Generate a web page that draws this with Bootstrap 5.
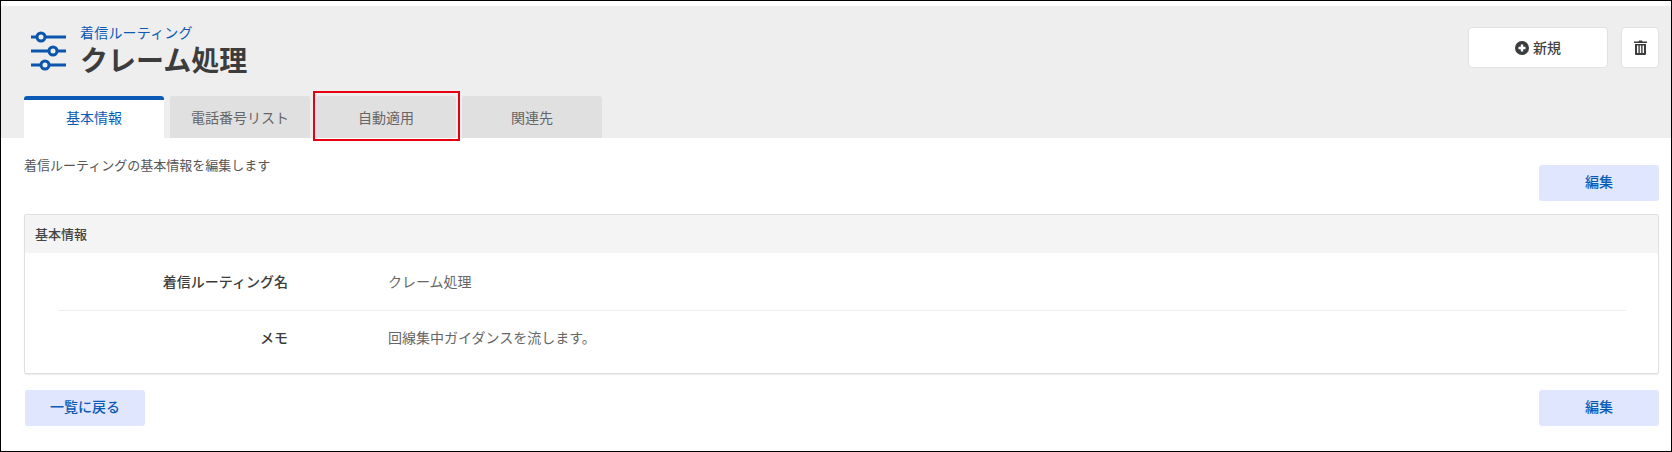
<!DOCTYPE html>
<html lang="ja">

<head>
    <meta charset="UTF-8">
    <meta name="viewport" content="width=device-width, initial-scale=1.0">
    <title>クレーム処理</title>
    <link href="https://cdn.jsdelivr.net/npm/bootstrap@5.3.0/dist/css/bootstrap.min.css" rel="stylesheet">
    <style>
        body {
            font-family: "Noto Sans CJK JP", "Liberation Sans", sans-serif;
            font-size: 14px;
            color: #555;
            background: #fff;
        }

        .frame {
            height: 452px;
            border: 1px solid #000;
            padding-top: 5px;
        }

        .page-head {
            background: #eee;
            height: 132px;
            padding: 0 12px 0 23px;
        }

        .head-top {
            height: 90px;
        }

        .head-title {
            padding: 19px 0 0 12px;
        }

        .head-sub {
            color: #0b5ab5;
            font-size: 14px;
            letter-spacing: .2px;
            line-height: 14px;
        }

        .head-main {
            color: #3c3c3c;
            font-size: 28px;
            font-weight: 700;
            line-height: 34px;
            margin: 3px 0 0;
        }

        .head-actions {
            gap: 13px;
            padding-top: 21px;
        }

        .btn-white {
            background: #fff;
            border: 1px solid #e2e2e2;
            border-radius: 4px;
            color: #444;
            font-size: 14px;
            font-weight: 500;
            height: 41px;
            padding: 0;
        }

        .btn-new {
            width: 140px;
        }

        .btn-trash {
            width: 38px;
        }

        .tab-row {
            gap: 6px;
            border: 0;
        }

        .tab-row .nav-link {
            width: 140px;
            height: 42px;
            margin: 0;
            padding: 0;
            border: 0;
            border-radius: 3px 3px 0 0;
            background: #e0e0e0;
            color: #666;
            font-size: 14px;
            line-height: 20px;
            text-align: center;
        }

        .tab-row .nav-link.active {
            background: #fff;
            color: #0b5ab5;
            border-top: 4px solid #0b5ab5;
            padding: 0 0 4px;
        }

        .tab-callout {
            position: absolute;
            top: -5px;
            left: -3px;
            right: -4px;
            bottom: -3px;
            border: 2px solid #e60012;
            pointer-events: none;
        }

        .page-body {
            padding: 0 12px 0 23px;
        }

        .intro-row {
            height: 76px;
        }

        .intro-text {
            font-size: 13px;
            line-height: 18px;
            margin-top: 18px;
        }

        .btn-soft {
            background: #dfe6fd;
            border: 0;
            border-radius: 3px;
            color: #0b5ab5;
            font-size: 14px;
            font-weight: 500;
            height: 36px;
            padding: 0 0 3px;
            width: 120px;
        }

        .intro-row .btn-soft {
            margin-top: 27px;
        }

        .btn-soft.btn-back {
            margin-left: 1px;
        }

        .info-box {
            height: 160px;
            border: 1px solid #e0e0e0;
            border-radius: 2px;
            box-shadow: 0 1px 1px rgba(0, 0, 0, .08);
        }

        .info-head {
            background: #f4f4f4;
            color: #444;
            font-size: 13px;
            font-weight: 500;
            height: 38px;
            line-height: 38px;
            padding-left: 10px;
        }

        .info-list {
            padding: 0 32px 0 33px;
        }

        .info-row {
            height: 57px;
        }

        .info-row + .info-row {
            border-top: 1px solid #eee;
            padding-bottom: 3px;
        }

        .info-label {
            width: 230px;
            color: #3c3c3c;
            font-weight: 500;
            text-align: right;
        }

        .info-value {
            margin-left: 100px;
            color: #666;
        }

        .foot-row {
            margin-top: 16px;
        }
    </style>
</head>

<body>
    <div class="frame">
        <div class="page-head">
            <div class="head-top d-flex justify-content-between">
                <div class="d-flex">
                    <svg class="mt-4" width="44" height="48" viewBox="0 0 44 48" fill="none" stroke="#0b55ad" stroke-width="3">
                        <path d="M7 7h5M22 7h20M7 21h17M34 21h8M7 35h9M26 35h16" />
                        <circle cx="17" cy="7" r="4" />
                        <circle cx="29" cy="21" r="4" />
                        <circle cx="21" cy="35" r="4" />
                    </svg>
                    <div class="head-title">
                        <div class="head-sub">着信ルーティング</div>
                        <h1 class="head-main">クレーム処理</h1>
                    </div>
                </div>
                <div class="head-actions d-flex align-items-start">
                    <button class="btn btn-white btn-new d-flex align-items-center justify-content-center gap-1" type="button">
                        <svg width="14" height="14" viewBox="0 0 14 14">
                            <circle cx="7" cy="7" r="7" fill="#3c3c3c" />
                            <path d="M7 3.500v7M3.500 7h7" stroke="#fff" stroke-width="2.4" />
                        </svg>
                        新規
                    </button>
                    <button class="btn btn-white btn-trash d-flex align-items-center justify-content-center" type="button" aria-label="削除">
                        <svg width="13" height="15" viewBox="0 0 13 15" fill="#3c3c3c">
                            <path d="M0 1.500h4.500l.5-1h3l.5 1H13V3H0zM1 4h11v10a1 1 0 0 1-1 1H2a1 1 0 0 1-1-1zm2 1.500V13h1.400V5.500zm2.800 0V13h1.400V5.500zm2.800 0V13H10V5.500z" fill-rule="evenodd" />
                        </svg>
                    </button>
                </div>
            </div>
            <ul class="nav nav-tabs tab-row" role="tablist">
                <li class="nav-item" role="presentation">
                    <button class="nav-link active" type="button" role="tab">基本情報</button>
                </li>
                <li class="nav-item" role="presentation">
                    <button class="nav-link" type="button" role="tab">電話番号リスト</button>
                </li>
                <li class="nav-item position-relative" role="presentation">
                    <button class="nav-link" type="button" role="tab">自動適用</button>
                    <span class="tab-callout"></span>
                </li>
                <li class="nav-item" role="presentation">
                    <button class="nav-link" type="button" role="tab">関連先</button>
                </li>
            </ul>
        </div>

        <div class="page-body">
            <div class="intro-row d-flex justify-content-between align-items-start">
                <div class="intro-text">着信ルーティングの基本情報を編集します</div>
                <button class="btn btn-soft" type="button">編集</button>
            </div>

            <div class="info-box">
                <div class="info-head">基本情報</div>
                <div class="info-list">
                    <div class="info-row d-flex align-items-center">
                        <div class="info-label">着信ルーティング名</div>
                        <div class="info-value">クレーム処理</div>
                    </div>
                    <div class="info-row d-flex align-items-center">
                        <div class="info-label">メモ</div>
                        <div class="info-value">回線集中ガイダンスを流します。</div>
                    </div>
                </div>
            </div>

            <div class="foot-row d-flex justify-content-between">
                <button class="btn btn-soft btn-back" type="button">一覧に戻る</button>
                <button class="btn btn-soft" type="button">編集</button>
            </div>
        </div>
    </div>

    <script src="https://cdn.jsdelivr.net/npm/bootstrap@5.3.0/dist/js/bootstrap.bundle.min.js"></script>
</body>

</html>
